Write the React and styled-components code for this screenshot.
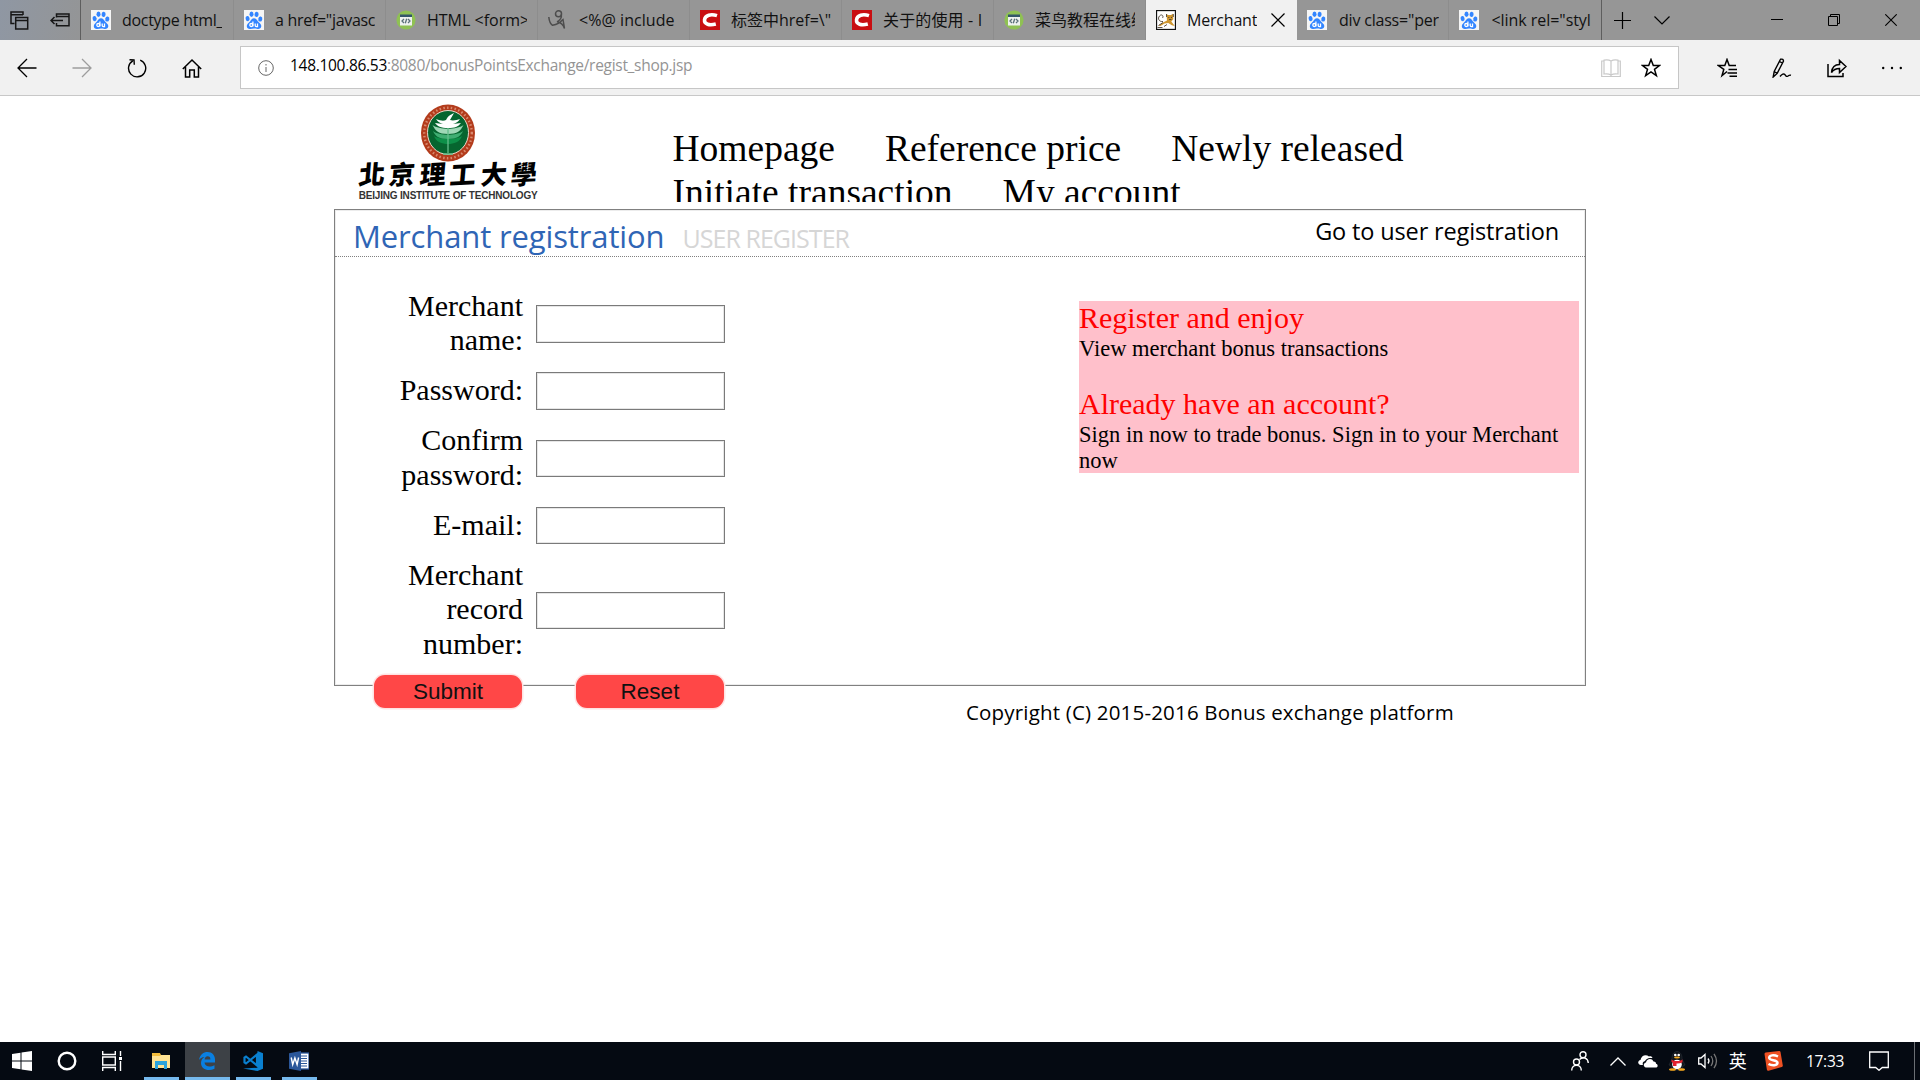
import React from "react";
import styled, { createGlobalStyle, css } from "styled-components";

const ui = `"Open Sans", "Noto Sans CJK SC", sans-serif`;
const serif = `"Liberation Serif", "Times New Roman", serif`;

const Global = createGlobalStyle`
  * { box-sizing: border-box; }
  html, body { margin: 0; padding: 0; background: #fff; }
  body { overflow: hidden; }
`;

const Screen = styled.div`
  width: 1920px;
  height: 1080px;
  display: flex;
  flex-direction: column;
  background: #fff;
  color: #000;
  overflow: hidden;
`;

/* ---------- tab strip ---------- */
const TabStrip = styled.div`
  flex: none;
  height: 40px;
  display: flex;
  background: #969696;
  font-family: ${ui};
`;
const StripTools = styled.div`
  width: 81px;
  display: flex;
  align-items: center;
  padding-left: 10px;
  gap: 21px;
  background: linear-gradient(100deg, #8f97a3, #949596);
  border-right: 1px solid #5e5e5e;
`;
const Tab = styled.div`
  width: ${(p) => p.$w}px;
  display: flex;
  align-items: center;
  padding-left: 10px;
  background: ${(p) => (p.$active ? "#f1f1f1" : "transparent")};
  border-right: 1px solid ${(p) => (p.$active ? "#f1f1f1" : p.$last ? "#5e5e5e" : "#8d8d8d")};
`;
const TabTitle = styled.span`
  margin-left: ${(p) => p.$ml || 11}px;
  width: ${(p) => (p.$active ? 70 : 100)}px;
  overflow: hidden;
  white-space: nowrap;
  font-size: 16px;
  line-height: 30px;
  letter-spacing: ${(p) => p.$ls || 0}px;
  color: #111;
`;
const StripActions = styled.div`
  flex: 1;
  display: flex;
  align-items: center;
  padding-left: 12px;
`;
const StripIcon = styled.div`
  display: flex;
  margin-left: ${(p) => p.$ml || 0}px;
`;

/* ---------- toolbar ---------- */
const Toolbar = styled.div`
  flex: none;
  height: 56px;
  display: flex;
  background: #f1f1f1;
  border-bottom: 1px solid #c8c8c8;
`;
const ToolButton = styled.div`
  width: 55px;
  padding-right: 1px;
  display: flex;
  align-items: center;
  justify-content: center;
`;
const Address = styled.div`
  margin: 6px 21px 6px 20px;
  height: 43px;
  flex: 1;
  display: flex;
  align-items: center;
  padding: 0 17px;
  background: #fff;
  border: 1px solid #c6c6c6;
`;
const Url = styled.div`
  flex: 1;
  margin-left: 16px;
  padding-bottom: 5px;
  font-family: ${ui};
  font-size: 15.5px;
  letter-spacing: -0.3px;
  line-height: 22px;
  color: #949494;
  b { font-weight: 400; color: #000; }
`;
const AddressIcons = styled.div`
  display: flex;
  gap: 20px;
`;

/* ---------- page ---------- */
const Page = styled.main`
  flex: 1;
  display: flex;
  flex-direction: column;
  align-items: center;
`;
const Header = styled.header`
  width: 1251px;
  height: 106px;
  display: flex;
  overflow: hidden;
`;
const Logo = styled.div`
  width: 205px;
  margin-left: 11px;
  padding-top: 8px;
  display: flex;
  flex-direction: column;
  align-items: center;
`;
const LogoName = styled.div`
  margin-top: -4px;
  height: 30px;
  display: flex;
  justify-content: space-between;
  width: 178px;
  font: 900 26px/30px "Noto Sans CJK TC", sans-serif;
  span { transform: skewX(-8deg) rotate(-3deg); }
`;
const LogoCaption = styled.div`
  margin-top: 1px;
  font: 700 11.3px/12px "Liberation Sans", sans-serif;
  white-space: nowrap;
  letter-spacing: -0.2px;
  transform: scaleX(0.885);
  color: #333;
`;
const Nav = styled.nav`
  margin-left: 122px;
  padding-top: 31px;
  width: 800px;
  display: flex;
  flex-wrap: wrap;
  align-content: flex-start;
  column-gap: 50px;
  font: 37.5px/44px ${serif};
`;
const Panel = styled.section`
  margin-top: 7px;
  width: 1252px;
  height: 477px;
  border: 1px solid #808080;
  box-shadow: inset 0 0 0 1px #ececec;
`;
const PanelHead = styled.div`
  height: 47px;
  display: flex;
  padding: 0 26px 0 18px;
  border-bottom: 1px dotted #808080;
  font-family: ${ui};
  white-space: nowrap;
`;
const Title = styled.h1`
  margin: 0;
  font-size: 31px;
  font-weight: 400;
  line-height: 52px;
  letter-spacing: -0.13px;
  color: #2f65b5;
`;
const Subtitle = styled.span`
  margin-left: 18px;
  font-size: 25px;
  line-height: 57px;
  letter-spacing: -0.95px;
  color: #d6d6d6;
`;
const SwitchLink = styled.a`
  margin-left: auto;
  font-size: 23.5px;
  line-height: 43px;
  letter-spacing: -0.14px;
`;
const PanelBody = styled.div`
  display: flex;
  justify-content: space-between;
  align-items: flex-start;
  padding: 32px 6px 0 39px;
`;
const Form = styled.form`
  width: 351px;
  padding-top: 0.6px;
  display: flex;
  flex-direction: column;
  gap: 14.3px;
`;
const Field = styled.label`
  display: flex;
  align-items: center;
  justify-content: flex-end;
  gap: 13px;
`;
const FieldName = styled.span`
  width: 130px;
  margin: -1px 0 0.5px;
  text-align: right;
  font: 30px/34.5px ${serif};
`;
const Input = styled.input`
  width: 189px;
  height: 37.5px;
  padding: 0 4px;
  border: 1px solid #7a7a7a;
  box-shadow: inset 0 0 0 1px #e6e6e6;
  background: #fff;
  outline: none;
`;
const Buttons = styled.div`
  margin-top: -0.6px;
  display: flex;
  justify-content: space-between;
  padding-right: 1px;
`;
const Button = styled.button`
  width: 148px;
  height: 33px;
  padding: 1px 0 0;
  border: 0;
  border-radius: 11px;
  background: #ff4747;
  box-shadow: 0 0 0 1.5px #ffe3e3;
  color: #111;
  font: 22.5px/32px "Liberation Sans", Arial, sans-serif;
`;
const Promo = styled.aside`
  margin-top: 12px;
  width: 500px;
  height: 172px;
  background: pink;
  font: 22.5px/26px ${serif};
`;
const PromoTitle = styled.h2`
  margin: 0;
  font: 30px/34px ${serif};
  color: #f00;
`;
const PromoText = styled.p`
  margin: 0 0 25px;
  padding-top: 1px;
`;
const Footer = styled.footer`
  align-self: flex-start;
  margin: 11px 0 0 966px;
  font: 20.5px/30px ${ui};
  letter-spacing: 0.18px;
  white-space: nowrap;
`;

/* ---------- taskbar ---------- */
const Taskbar = styled.div`
  flex: none;
  height: 38px;
  display: flex;
  background: #050a12;
  color: #fff;
`;
const AppButton = styled.div`
  width: 45px;
  display: flex;
  flex-direction: column;
  align-items: center;
  padding-top: 9px;
  margin-left: ${(p) => p.$ml || 0}px;
  background: ${(p) => (p.$active ? "#3d4146" : "transparent")};
  > svg { margin-right: 1px; }
  ${(p) => p.$open && css`
    &::after {
      content: "";
      margin-top: auto;
      width: ${p.$active ? 45 : 35}px;
      height: 3px;
      background: #76b9ed;
    }
  `}
`;
const Tray = styled.div`
  margin-left: auto;
  display: flex;
`;
const TrayCell = styled.div`
  width: ${(p) => p.$w}px;
  margin-right: ${(p) => p.$mr || 0}px;
  display: flex;
  align-items: center;
  justify-content: center;
  font: ${(p) => p.$fs || 15.5}px/38px ${ui};
  letter-spacing: -0.3px;
`;
const ShowDesktop = styled.div`
  width: 6px;
  border-left: 1px solid #6b6f74;
`;
const Drawing = styled.svg`
  display: block;
  flex: none;
  fill: none;
`;

const Svg = ({ w = 20, h = w, sw = 1.3, c = "#000", children }) => (
  <Drawing width={w} height={h} viewBox={`0 0 ${w} ${h}`} stroke={c} strokeWidth={sw}>
    {children}
  </Drawing>
);

const Baidu = () => (
  <Svg c="none">
    <rect width="20" height="20" fill="#f6f6f6" />
    <g fill="#3385ff">
      <ellipse cx="3.6" cy="8.6" rx="2" ry="2.7" transform="rotate(-12 3.6 8.6)" />
      <ellipse cx="7.5" cy="4.3" rx="2" ry="2.7" />
      <ellipse cx="12.6" cy="4.4" rx="2" ry="2.7" transform="rotate(8 12.6 4.4)" />
      <ellipse cx="16.3" cy="9" rx="2" ry="2.6" transform="rotate(12 16.3 9)" />
      <path d="M10 8.2c2 0 2.800 1.600 4 3.200s3.500 2.500 3.300 4.800c-.2 2.200-1.800 2.900-3.800 2.700-1.400-.2-2.300-.4-3.500-.4s-2.200.3-3.600.4c-2 .2-3.500-.6-3.600-2.700-.1-2.300 2-3.200 3.200-4.800S8 8.200 10 8.200z" />
    </g>
    <g stroke="#fff" strokeWidth="1.3">
      <circle cx="7.300" cy="15" r="1.500" />
      <path d="M8.900 11.600v5M11.200 13.400v2.200q0 1 1.100 1h1.200v-3.200" />
    </g>
  </Svg>
);
const Runoob = () => (
  <Svg c="none">
    <circle cx="10" cy="10" r="9.600" fill="#8fc153" />
    <rect x="4" y="5" width="12" height="10.500" fill="#eef1ee" />
    <rect x="4" y="4.500" width="12" height="2.500" fill="#34566a" />
    <path d="M8 9l-2 2 2 2M12 9l2 2-2 2M10.700 8.800l-1.400 4.400" stroke="#5b7078" />
  </Svg>
);
const Sketch = () => (
  <Svg c="#4d4d4d" sw={1.5}>
    <circle cx="10.500" cy="3.800" r="3" />
    <path d="M13.300 4.500c.6 3.500-1 5.500-4.300 7.300M.8 7c.4 4 1.600 7 3.700 8.300 4-.8 7.500-2.300 9.200-4.800l1.300-1 1.500 9c-1-3-3-6-7.500-6.700" />
  </Svg>
);
const Csdn = () => (
  <Svg c="none">
    <rect width="20" height="20" fill="#c90e12" />
    <path d="M17 5.700c-6-2-12-.6-12.500 4.100-.5 4.600 5 5.800 11.300 4.200" stroke="#fff" strokeWidth="3.500" />
  </Svg>
);
const Tomcat = () => (
  <Svg c="none">
    <rect x=".5" y=".5" width="19" height="19" fill="#fff" stroke="#111" />
    <path d="M2.500 15.500l4.500-3 4-2-.5-6.500 1.500 1h3l2-1.200.3 5.500-2 2.200 3.500 4.500-3-.7-3.500-2.300-3.800.5-4 2.500z" fill="#cf962f" />
    <path d="M7 11.500C3 12 1.300 8.500 3.500 6S8 6 6.500 8M2.500 15.500l4.500-3M10.500 4v3M17.300 4v3M12.300 7.500h1M15 7.500h1M13 9.500h2.500M1.500 17.500h5M8 16.500l3-2" stroke="#4b4033" strokeWidth=".9" />
  </Svg>
);
const star = "M10 1.500l2.300 6h6.200l-5 3.900 1.900 6.300L10 14l-5.400 3.700 1.900-6.300-5-3.900h6.200z";

const tabs = [
  { icon: <Baidu />, text: "doctype html_", ls: -0.3, w: 153 },
  { icon: <Baidu />, text: 'a href="javasc', ls: -0.3, w: 152 },
  { icon: <Runoob />, text: "HTML <form>", ls: 0, w: 152 },
  { icon: <Sketch />, text: "<%@ include", ls: 0.05, w: 152 },
  { icon: <Csdn />, text: '标签中href=\\"', ls: 0, w: 152 },
  { icon: <Csdn />, text: "关于的使用 - I", ls: 0.15, w: 152 },
  { icon: <Runoob />, text: "菜鸟教程在线编", ls: 0, w: 152 },
  { icon: <Tomcat />, text: "Merchant", ls: -0.2, w: 151, active: true },
  { icon: <Baidu />, text: 'div class="per', ls: -0.2, w: 152, ml: 12 },
  { icon: <Baidu />, text: '<link rel="styl', ls: -0.05, w: 153, ml: 12.5, last: true },
];

const fields = [
  ["Merchant name:", "text"],
  ["Password:", "password"],
  ["Confirm password:", "password"],
  ["E-mail:", "text"],
  ["Merchant record number:", "text"],
];

export default function App() {
  return (
    <Screen>
      <Global />
      <TabStrip>
        <StripTools>
          <Svg w={19} c="#161616" sw={1.5}>
            <path d="M4.500 12.500H1V1h12v3M1 3.800h12M5.700 6.500h12v11.500h-12zM5.700 9.400h12" />
          </Svg>
          <Svg w={20} h={14} c="#161616" sw={1.5}>
            <path d="M6.500 4.500V1h12.500v11.800H6.500V10M6.500 3.500H19M1 7.500h12M4.500 4L1 7.500 4.500 11" />
          </Svg>
        </StripTools>
        {tabs.map((t, i) => (
          <Tab key={i} $w={t.w} $active={t.active} $last={t.last}>
            {t.icon}
            <TabTitle $ls={t.ls} $ml={t.ml} $active={t.active}>{t.text}</TabTitle>
            {t.active && (
              <StripIcon $ml={14}>
                <Svg w={14} sw={1.200}><path d="M.5.5l13 13M13.500.5l-13 13" /></Svg>
              </StripIcon>
            )}
          </Tab>
        ))}
        <StripActions>
          <Svg w={17} sw={1.200}><path d="M8.500 0v17M0 8.500h17" /></Svg>
          <StripIcon $ml={23}><Svg w={16} h={9} sw={1.200}><path d="M.5.5L8 8l7.500-7.500" /></Svg></StripIcon>
          <StripIcon $ml={101}><Svg w={12} h={2} sw={1}><path d="M0 .5h12" /></Svg></StripIcon>
          <StripIcon $ml={45}><Svg w={12} sw={1}><path d="M.5 2.500h9v9h-9zM2.500 2.500v-2h9v9h-2" /></Svg></StripIcon>
          <StripIcon $ml={45}><Svg w={12} sw={1.100}><path d="M.3.3l11.400 11.400M11.700.3L.3 11.700" /></Svg></StripIcon>
        </StripActions>
      </TabStrip>

      <Toolbar>
        <ToolButton><Svg><path d="M19.500 10H1M10 1L1 10l9 9" /></Svg></ToolButton>
        <ToolButton><Svg c="#9d9d9d"><path d="M.5 10H19M10 1l9 9-9 9" /></Svg></ToolButton>
        <ToolButton><Svg sw={1.400}><path d="M13.200 2.200A8.600 8.600 0 1 1 5.800 2.800M2.500 1.800l4.500.2.300 4.700" /></Svg></ToolButton>
        <ToolButton><Svg sw={1.500}><path d="M.8 11L10 2l9.200 9M3.500 9v10h4.200v-7h4.600v7h4.200V9" /></Svg></ToolButton>
        <Address>
          <Svg w={16} c="#666" sw={1}><circle cx="8" cy="8" r="7.300" /><path d="M8 7v5M8 4v1.500" /></Svg>
          <Url><b>148.100.86.53</b>:8080/bonusPointsExchange/regist_shop.jsp</Url>
          <AddressIcons>
            <Svg c="#c9c9c9" sw={1.200}><path d="M3 3H.7v15.500h18.600V3H17M10 3v15M10 3c-2-1.200-5-1.200-7-.8V16c2.500-.4 5-.2 7 1 2-1.200 4.500-1.400 7-1V2.200c-2-.4-5-.4-7 .8z" /></Svg>
            <Svg sw={1.500}><path d={star} /></Svg>
          </AddressIcons>
        </Address>
        <ToolButton>
          <Svg sw={1.500}><path d="M10 13.500l-5 4.200 1.800-6.300-5.500-3.900h6.500L10 1.500l2.200 6H19M11.500 11.500H20M10.500 15H20M12.500 18.300H20" /></Svg>
        </ToolButton>
        <ToolButton>
          <Svg sw={1.400}><path d="M1.200 19l1-5.500L8.500 1.300q3-.8 3 1.700L5.200 15.400zM2.200 13.500l3 1.900M7.500 3.500l3 1.700M8 18.500c2-2.500 3.800-3.200 4.800-2 .8 1.300 1.500 2.600 3.200 1.500 1.300-1 2-1 3-.8" /></Svg>
        </ToolButton>
        <ToolButton>
          <Svg sw={1.500}><path d="M1 6v12.500h15V15M4.500 14.500c.5-5 3.500-8 8-8V2.500L19 8.500l-6.500 6v-4c-4 0-6 1-8 4z" /></Svg>
        </ToolButton>
        <ToolButton>
          <Svg c="none"><g fill="#000"><circle cx="1.200" cy="10" r="1.200" /><circle cx="10" cy="10" r="1.200" /><circle cx="18.800" cy="10" r="1.200" /></g></Svg>
        </ToolButton>
      </Toolbar>

      <Page>
        <Header>
          <Logo>
            <Svg w={54} h={58} c="none">
              <ellipse cx="27" cy="29" rx="27" ry="28.500" fill="#b33c1c" />
              <ellipse cx="27" cy="29" rx="23.800" ry="25.300" stroke="#d98a70" strokeWidth="2.400" strokeDasharray="1.500 2.300" />
              <ellipse cx="27" cy="28.500" rx="20.500" ry="22" fill="#06652f" stroke="#ead9cc" strokeWidth="1" />
              <path d="M13 32c5 4 23 4 28 0-2 6-8 8-14 8s-12-2-14-8z" fill="#0d8f48" />
              <path d="M12 27c6 5 24 5 30 0-2 5-6 8-15 8s-13-3-15-8z" fill="#3fae72" />
              <path d="M11.500 21c7 5 24 5 31 0-3 6-6 9-15.500 9S14.500 27 11.500 21z" fill="#9fd8b7" />
              <path d="M15 15c5 2 8 2 10 1 2-4 4-5 8-7l-4 7c3 1 7 0 10-1-2 3-4 4-7 5l8-1c-3 4-6 5-13 5s-11-2-13-5l8 1c-3-1-5-2-7-5z" fill="#fff" />
              <path d="M27 24v25M22 50h10" stroke="#64bd8b" strokeWidth="1.300" />
            </Svg>
            <LogoName>{[..."北京理工大學"].map((c) => <span key={c}>{c}</span>)}</LogoName>
            <LogoCaption>BEIJING INSTITUTE OF TECHNOLOGY</LogoCaption>
          </Logo>
          <Nav>
            <span>Homepage</span>
            <span>Reference price</span>
            <span>Newly released</span>
            <span>Initiate transaction</span>
            <span>My account</span>
          </Nav>
        </Header>

        <Panel>
          <PanelHead>
            <Title>Merchant registration</Title>
            <Subtitle>USER REGISTER</Subtitle>
            <SwitchLink>Go to user registration</SwitchLink>
          </PanelHead>
          <PanelBody>
            <Form onSubmit={(e) => e.preventDefault()}>
              {fields.map(([name, type]) => (
                <Field key={name}>
                  <FieldName>{name}</FieldName>
                  <Input type={type} />
                </Field>
              ))}
              <Buttons>
                <Button type="submit">Submit</Button>
                <Button type="reset">Reset</Button>
              </Buttons>
            </Form>
            <Promo>
              <PromoTitle>Register and enjoy</PromoTitle>
              <PromoText>View merchant bonus transactions</PromoText>
              <PromoTitle>Already have an account?</PromoTitle>
              <PromoText>Sign in now to trade bonus. Sign in to your Merchant now</PromoText>
            </Promo>
          </PanelBody>
        </Panel>
        <Footer>Copyright (C) 2015-2016 Bonus exchange platform</Footer>
      </Page>

      <Taskbar>
        <AppButton>
          <Svg c="none"><path d="M0 3l8.500-1.200v7.700H0zM9.500 1.600L20 0v9.500H9.500zM0 10.500h8.500v7.800L0 17zM9.500 10.500H20V20L9.500 18.500z" fill="#fff" /></Svg>
        </AppButton>
        <AppButton><Svg c="#fff" sw={2.400}><circle cx="10" cy="10" r="8.300" /></Svg></AppButton>
        <AppButton>
          <Svg c="#fff" sw={1.400}>
            <path d="M.7 0v3.500h12.600V0M.7 20v-3.500h12.600V20M.7 6h12.600v8H.7zM18.500 0v5M18.500 10v10" />
            <path d="M17 6h3v3h-3z" fill="#fff" stroke="none" />
          </Svg>
        </AppButton>
        <AppButton $open $ml={4}>
          <Svg c="none">
            <path d="M1 2h8l1 2h9v13H1z" fill="#f3bd3c" />
            <path d="M1 5h8l1-1h9v13H1z" fill="#ffe394" />
            <path d="M4 18v-8h12v8h-3v-4H7v4z" fill="#2ba4dd" />
          </Svg>
        </AppButton>
        <AppButton $open $active $ml={1}>
          <Svg c="none">
            <path d="M2 9C3 3.500 6.500 1 10.500 1c5 0 7.700 3.800 7.500 8v2.500H7.500c.3 4.500 6 5 10 2.700v3.500c-6 3-13.500.8-13.500-5.700 0-3 1.500-5 3.500-6C5 6.200 3.200 7.300 2 9zm5.600-.5h5.800c0-2-.8-3.200-2.800-3.200-1.800 0-2.800 1.400-3 3.200z" fill="#0a7fe0" />
          </Svg>
        </AppButton>
        <AppButton $open $ml={1}>
          <Svg c="none">
            <path d="M14.500 0L20 2.200v15.600L14.500 20 0 17.500l14.500-.8z" fill="#0a80d0" />
            <path d="M14 3.500L3 12.500 1.500 11.500v-5L3 5.500l11 9z" stroke="#0a80d0" strokeWidth="2.200" />
          </Svg>
        </AppButton>
        <AppButton $open $ml={1}>
          <Svg c="none">
            <rect x="10" y="2" width="10" height="16" fill="#fff" stroke="#2b579a" />
            <path d="M12 5h6M12 7.500h6M12 10h6M12 12.500h6M12 15h6" stroke="#2b579a" strokeWidth="1.200" />
            <path d="M0 2.200L12 0v20L0 17.800z" fill="#2b579a" />
            <path d="M2.200 6.500l1.500 7 2.200-6.500 2.200 6.500 1.500-7" stroke="#fff" strokeWidth="1.400" />
          </Svg>
        </AppButton>
        <Tray>
          <TrayCell $w={36} $mr={5}>
            <Svg w={18} h={20} c="#fff" sw={1.400}>
              <circle cx="12" cy="3.700" r="3" /><circle cx="5.500" cy="11" r="3" />
              <path d="M.7 19.500c0-7 9.600-7 9.600 0M8.500 8.500c3.500-3.500 8.500-1.500 8.800 3.500" />
            </Svg>
          </TrayCell>
          <TrayCell $w={30}><Svg w={16} h={9} c="#fff"><path d="M.5 8.500L8 1l7.500 7.500" /></Svg></TrayCell>
          <TrayCell $w={30}>
            <Svg w={20} h={14} c="none">
              <path d="M5 11H3C-.8 10.500-.5 6.500 2.500 6 3 2 7.500-.5 11 2.500c2-.5 3 .3 3.500 1.500C9 3.500 7.500 6 7 7c-2 .5-2.800 2-2 4z" fill="#fff" />
              <path d="M8 13.500c-3-.3-3-4.500 0-5C8.500 4.500 14 3.500 15.500 7.500c2 0 2.500 1 2.500 2.200 2.500.8 2 3.800-.3 3.800z" fill="#fff" />
            </Svg>
          </TrayCell>
          <TrayCell $w={28} $mr={1}>
            <Svg w={18} h={20} c="none">
              <path d="M4 8C3.500-2 14.500-2 14 8l3 6-2 1-1.500 4h-9L3 15l-2-1z" fill="#10141a" stroke="#333a42" strokeWidth=".5" />
              <ellipse cx="9" cy="13.500" rx="4.800" ry="4.800" fill="#fff" />
              <circle cx="7.300" cy="4" r="1.300" fill="#fff" /><circle cx="10.700" cy="4" r="1.300" fill="#fff" />
              <path d="M3.500 8.500c3 2 8 2 11 0v2.700c-2 1-4 1.300-6 1.200V15H5v-3.300l-1.500-.7z" fill="#e3222d" />
              <ellipse cx="9" cy="6.600" rx="3" ry="1" fill="#f6a81c" />
              <ellipse cx="4.500" cy="18.500" rx="3.500" ry="1.300" fill="#f6a81c" /><ellipse cx="13.500" cy="18.500" rx="3.500" ry="1.300" fill="#f6a81c" />
            </Svg>
          </TrayCell>
          <TrayCell $w={31}>
            <Svg w={20} h={16} c="#fff">
              <path d="M.7 5H3l4-3.500v13L3 11H.7zM10 5.500q2 2.500 0 5" />
              <path d="M13 3q3.500 5 0 10M16 .8q5 7.200 0 14.400" stroke="#777" />
            </Svg>
          </TrayCell>
          <TrayCell $w={29} $fs={18}>英</TrayCell>
          <TrayCell $w={42}>
            <Svg c="none">
              <path d="M1.500 3q0-1.200 1.200-1.400L16 0q1.200-.1 1.500 1l2.300 13.500q.2 1.200-1 1.500L5.500 19.800q-1.300.3-1.600-1z" fill="#ee5123" />
              <path d="M15 5.500C11 3.500 6 4 6.200 7c.2 3 8.300 1.300 8.300 4.800 0 3-5.500 3.200-9 1.200" stroke="#fff" strokeWidth="2.500" />
            </Svg>
          </TrayCell>
          <TrayCell $w={62}>17:33</TrayCell>
          <TrayCell $w={46} $mr={12}>
            <Svg c="#fff"><path d="M.7 1h18.600v15.500h-6L10 19.300 6.700 16.500h-6z" /></Svg>
          </TrayCell>
          <ShowDesktop />
        </Tray>
      </Taskbar>
    </Screen>
  );
}
